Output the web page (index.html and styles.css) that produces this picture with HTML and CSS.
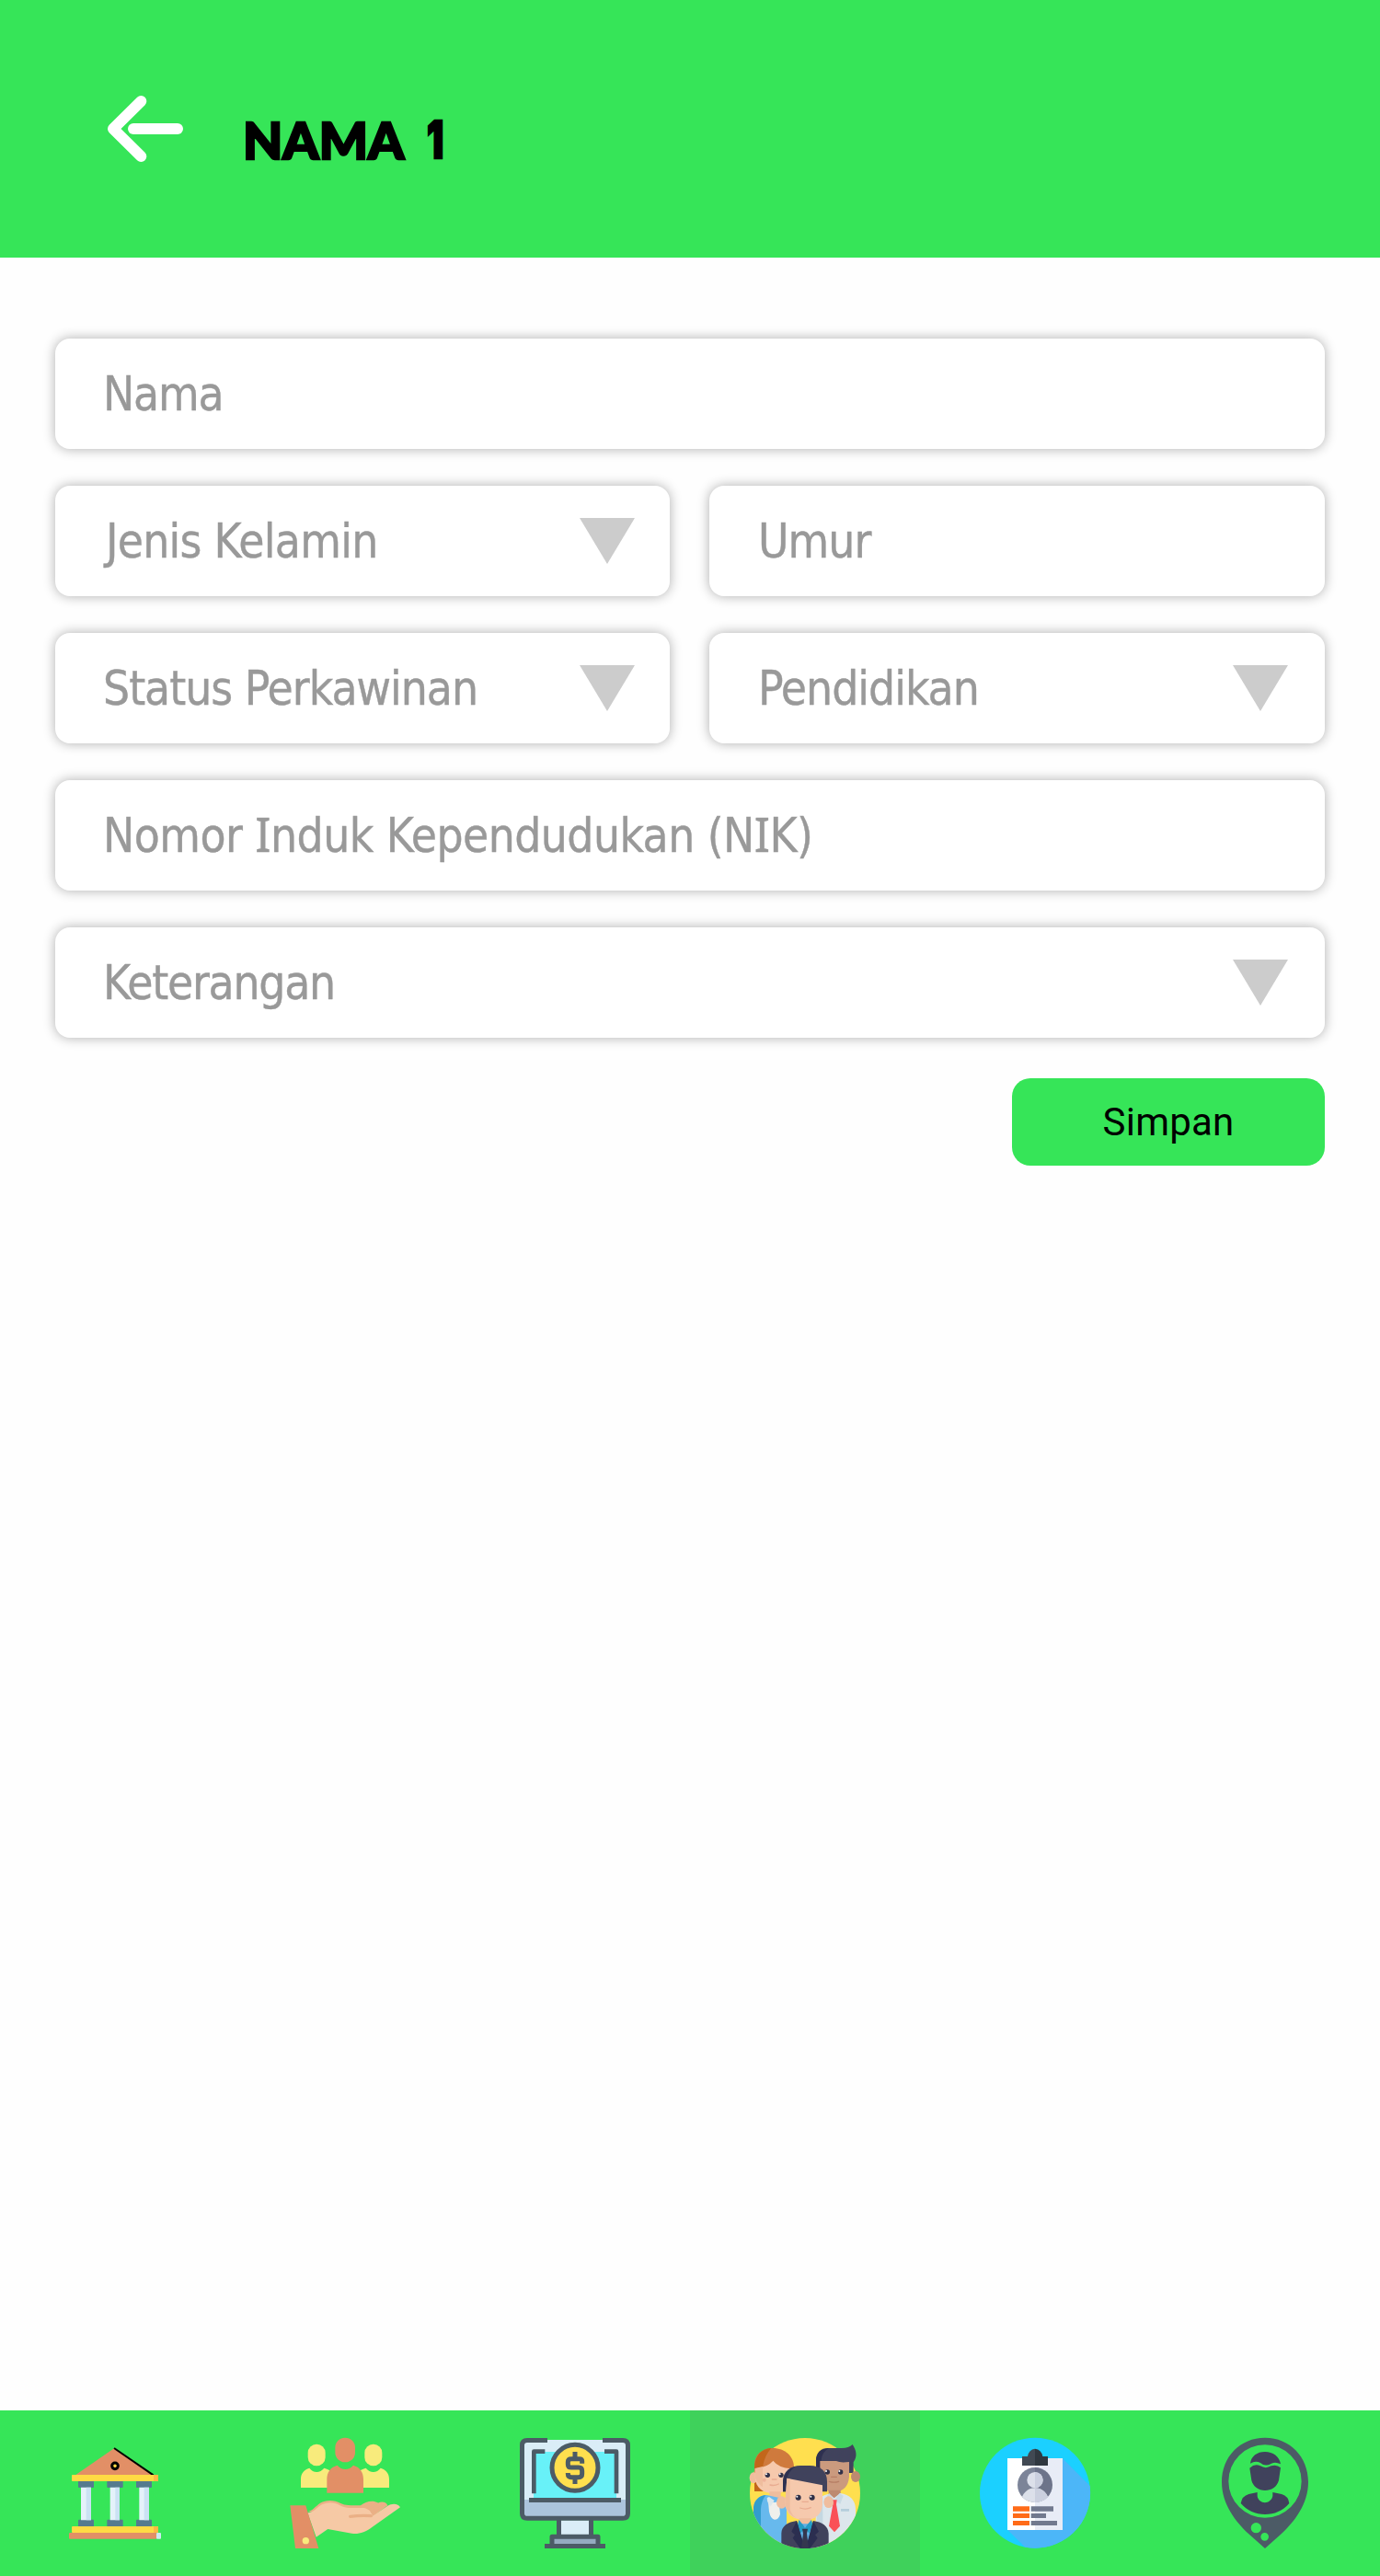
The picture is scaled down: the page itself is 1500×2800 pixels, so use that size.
FILE: index.html
```html
<!DOCTYPE html>
<html lang="id">
<head>
<meta charset="utf-8">
<title>Nama 1</title>
<link rel="stylesheet" href="styles.css">
</head>
<body>
<div class="screen">
  <header class="header">
    <svg class="back" viewBox="0 0 246 216"><g fill="none" stroke="#fff" stroke-width="36" stroke-linecap="round" stroke-linejoin="round"><path d="M109 18L18 108L109 198"/><path d="M84 108H228"/></g></svg>
    <h1 class="title"><span>NAMA</span><span class="title-number">1</span></h1>
  </header>
  <main class="form">
    <div class="field"><span class="label l-nama">Nama</span></div>
    <div class="row">
      <div class="field"><span class="label l-jenis">Jenis Kelamin</span><i class="caret"></i></div>
      <div class="field"><span class="label l-umur">Umur</span></div>
    </div>
    <div class="row">
      <div class="field"><span class="label l-status">Status Perkawinan</span><i class="caret"></i></div>
      <div class="field"><span class="label l-pendidikan">Pendidikan</span><i class="caret"></i></div>
    </div>
    <div class="field"><span class="label l-nik">Nomor <span class="serif-i">I</span>nduk Kependudukan (N<span class="serif-i">I</span>K)</span></div>
    <div class="field"><span class="label l-ket">Keterangan</span><i class="caret"></i></div>
    <button class="save" type="button">Simpan</button>
  </main>
  <nav class="nav">
    <a class="tab">
      <svg width="130" height="140" viewBox="0 0 390 420">
        <path d="M66 151L194 62L320 151Z" fill="#e28f66"/>
        <path d="M192 63L320 151" stroke="#000" stroke-width="6"/>
        <circle cx="195" cy="121" r="10" fill="#ffda44" stroke="#000" stroke-width="9"/>
        <g fill="#557b8e"><rect x="75" y="168" width="51" height="24" rx="3"/><rect x="169" y="168" width="52" height="24" rx="3"/><rect x="264" y="168" width="51" height="24" rx="3"/><rect x="75" y="296" width="51" height="24" rx="3"/><rect x="169" y="296" width="52" height="24" rx="3"/><rect x="264" y="296" width="51" height="24" rx="3"/></g>
        <path d="M84 191H117V298H84ZM179 191H210V298H179ZM274 191H306V298H274Z" fill="#e4f2fa"/>
        <path d="M101 191H117V298H101ZM196 191H210V298H196ZM290 191H306V298H290Z" fill="#cae2f3"/>
        <rect x="54" y="150" width="282" height="21" rx="3" fill="#ffda44"/><rect x="321" y="150" width="15" height="21" rx="3" fill="#ffb844"/>
        <rect x="54" y="318" width="282" height="21" rx="3" fill="#ffda44"/><rect x="321" y="318" width="15" height="21" rx="3" fill="#ffb844"/>
        <rect x="45" y="339" width="286" height="20" rx="3" fill="#e28f66"/><rect x="330" y="339" width="15" height="20" rx="3" fill="#cfe9f0"/>
      </svg>
    </a>
    <a class="tab">
      <svg width="150" height="160" viewBox="0 0 450 480">
        <g fill="#f8eb7c"><rect x="104" y="80" width="57" height="71" rx="28"/><rect x="289" y="80" width="57" height="71" rx="28"/>
        <path d="M81 222V194C81 176 91 163 109 158C121 175 144 175 157 158Q166 160 174 165V222ZM369 222V194C369 176 359 163 341 158C329 175 306 175 293 158Q284 160 276 165V222Z"/></g>
        <rect x="193" y="59" width="65" height="80" rx="32" fill="#e28f66"/>
        <path d="M166 239V195C166 171 178 155 200 149C213 166 239 166 252 149C273 155 285 171 285 195V239Z" fill="#e28f66"/>
        <path d="M103 300C119 298 130 281 144 272C165 260 191 262 211 273C226 281 242 279 276 280C291 268 316 261 332 272C348 265 360 270 364 280L308 322Z" fill="#eab086"/>
        <path d="M103 304C123 304 132 286 150 277C170 268 191 269 207 279C228 292 253 287 285 288C300 289 312 301 315 314L363 282C379 272 399 274 405 286L314 350C291 369 267 374 247 371L169 357L131 383Z" fill="#f6c9a5"/>
        <path d="M242 316Q275 312 310 314" fill="none" stroke="#eab086" stroke-width="10" stroke-linecap="round"/>
        <path d="M300 291L332 272M309 302L360 277" stroke="#eab086" stroke-width="7"/>
        <path d="M46 280H97L139 420H63Z" fill="#e28f66"/><circle cx="97" cy="395" r="11" fill="#f8eb7c"/>
      </svg>
    </a>
    <a class="tab">
      <svg width="150" height="160" viewBox="0 0 450 480">
        <rect x="52" y="66" width="346" height="257" rx="15" fill="#daedf7"/>
        <path d="M90 105H360V256H90Z" fill="#68f1f8"/>
        <path d="M52 261H398V309Q398 323 384 323H66Q52 323 52 309Z" fill="#abc4dc"/>
        <path d="M172 328H278V380H172Z" fill="#daedf7"/><path d="M150 385H300V412H150Z" fill="#95abc0"/>
        <g fill="none" stroke="#4c5b66" stroke-width="15" stroke-linejoin="round"><path d="M135 67.500H69Q52.500 67.500 52.500 84V306Q52.500 322 69 322H381Q397.500 322 397.500 306V84Q397.500 67.500 381 67.500H315"/><path d="M127 104H91V241M321 104H360V241" stroke-width="14"/><path d="M75 262.500H375M172.500 322V382M277.500 322V382"/><path d="M150 412V382H300V412"/><path d="M126 412.500H324"/></g>
        <circle cx="225" cy="157" r="75" fill="#ffdf4e" stroke="#4c5b66" stroke-width="15"/>
        <path d="M248 143V135Q248 128 239 128H213Q202 128 202 138V146Q202 156 213 156H237Q248 156 248 167V177Q248 188 237 188H213Q202 188 202 177V174M225 105V128M225 188V210" fill="none" stroke="#4c5b66" stroke-width="15"/>
      </svg>
    </a>
    <a class="tab tab-active">
      <svg width="150" height="160" viewBox="0 0 450 480">
        <defs><clipPath id="disc"><path d="M0 0H450V240H405A180 180 0 0 1 45 240H0Z"/></clipPath></defs>
        <circle cx="225" cy="240" r="180" fill="#ffdf4f"/>
        <g clip-path="url(#disc)">
          <path d="M60 234V147C60 113 87 93 119 93C161 93 189 120 189 157V234Z" fill="#cf7a3d"/>
          <path d="M60 160C60 119 82 95 115 93Q93 117 87 154V234H60Z" fill="#c2661b"/>
          <ellipse cx="57" cy="190" rx="13" ry="18" fill="#f0bd9d"/>
          <path d="M62 160Q104 155 121 134Q139 157 180 160V196C176 223 158 241 125 241C86 241 65 222 62 190Z" fill="#f6c9ad"/>
          <path d="M62 159L87 153V220Q68 206 62 188Z" fill="#efbd9e"/>
          <path d="M109 235H146V275H109Z" fill="#efbd9e"/>
          <path d="M60 420V285C61 263 75 246 100 246L165 260V420Z" fill="#67b9ed"/>
          <path d="M57 330V285C60 261 75 249 97 246Q82 267 81 291V360Z" fill="#329dce"/>
          <path d="M104 254Q119 279 140 265L144 308Q140 326 125 326Q113 324 108 300Z" fill="#efefeb"/><path d="M108 252L125 264L113 283Q101 272 101 255Z" fill="#dce8ec"/>
          <path d="M261 170V134C261 107 276 93 300 93H345Q368 93 380 81C391 98 398 118 383 139V174H261Z" fill="#40425c"/><path d="M261 160V130Q265 96 303 93Q280 105 278 133V165Z" fill="#2e3050"/>
          <ellipse cx="390" cy="186" rx="15" ry="18" fill="#bd8a70"/>
          <path d="M274 135H327Q340 142 369 138V187C366 219 350 235 320 236C291 236 276 219 274 190Z" fill="#cb9a7e"/>
          <path d="M302 230H341V270H302Z" fill="#bd8a70"/>
          <path d="M260 420V285C260 259 277 248 304 242L320 256L340 240C371 245 390 262 390 292V420Z" fill="#dce6ec"/>
          <path d="M263 300Q268 265 283 254V350H263Z" fill="#c4d7e1"/><path d="M304 240L320 262L306 281L297 248ZM338 240L350 249L340 275L322 262Z" fill="#c9dae4"/>
          <path d="M315 262H329L327 277L339 347L321 367L303 347L316 277Z" fill="#fa5057"/><path d="M342 291H369V299H342Z" fill="#b5cddb"/>
          <ellipse cx="149" cy="270" rx="17" ry="20" fill="#efbd9e"/><ellipse cx="302" cy="269" rx="16" ry="19" fill="#efbd9e"/>
          <path d="M153 235V201C153 169 178 150 210 150H240C276 150 297 169 297 202V235Z" fill="#40425c"/><path d="M153 235V200Q158 163 194 152Q170 170 167 192V235Z" fill="#2e3050"/>
          <path d="M166 191L282 214V278C280 309 257 327 226 327C189 327 162 311 160 272Z" fill="#f6c9ad"/><path d="M166 191L176 193V290Q181 314 202 323Q166 312 160 275Z" fill="#efbd9e"/>
          <path d="M206 322H245V360H206Z" fill="#efbd9e"/>
          <path d="M204 340L246 340L253 420H198Z" fill="#60afe4"/><path d="M205 327Q221 345 225 354Q230 345 246 327L252 350L238 370L225 356L210 370L199 350Z" fill="#259cc5"/>
          <path d="M148 420V371C149 347 169 334 198 330L223 420ZM302 420V371C301 347 280 334 252 330L229 420Z" fill="#40425c"/>
          <path d="M198 330L225 420H209L185 386L192 376L181 365ZM252 330L227 420H241L266 386L258 376L270 365Z" fill="#2b2e50"/>
          <path d="M216 356H234L231 371L237 420H213L219 371Z" fill="#34374f"/>
        </g>
        <g fill="#303047"><circle cx="103" cy="181" r="8"/><circle cx="147" cy="181" r="8"/><circle cx="298" cy="171" r="8"/><circle cx="341" cy="171" r="8"/><circle cx="203" cy="254" r="9"/><circle cx="248" cy="254" r="9"/></g>
        <g fill="#fff"><circle cx="99" cy="178" r="3"/><circle cx="143" cy="178" r="3"/><circle cx="294" cy="168" r="3"/><circle cx="337" cy="168" r="3"/><circle cx="199" cy="251" r="3"/><circle cx="244" cy="251" r="3"/></g>
        <g fill="none" stroke="#e9ac91" stroke-width="4" stroke-linecap="round"><path d="M118 195H132M111 213Q125 217 139 210M216 268H235M209 288Q227 295 244 287"/><path d="M311 187H328M304 202Q320 207 335 202" stroke="#b77f66"/></g><circle cx="92" cy="197" r="6" fill="#efb39b"/>
      </svg>
    </a>
    <a class="tab">
      <svg width="150" height="160" viewBox="0 0 450 480">
        <defs><clipPath id="portrait"><circle cx="225" cy="213" r="57"/></clipPath></defs>
        <circle cx="225" cy="239" r="180" fill="#1bd0ff"/>
        <path d="M315 127L404 216A180 180 0 0 1 193 416L136 360Z" fill="#4cb6f8"/>
        <path d="M135 126H226V360H135Z" fill="#fff"/><path d="M225 126H315V360H225Z" fill="#e8ecf6"/>
        <path d="M183 120H201Q205 97 225 95V150H183Z" fill="#414953"/><path d="M225 95Q246 97 250 120H267V150H225Z" fill="#303840"/>
        <g clip-path="url(#portrait)"><path d="M168 155H225V271H168Z" fill="#7c8498"/><path d="M225 155H283V271H225Z" fill="#6d748a"/><circle cx="225" cy="197" r="26" fill="#dce0ea"/><ellipse cx="225" cy="267" rx="45" ry="44" fill="#dce0ea"/><path d="M225 171A26 26 0 0 1 225 223Q259 225 270 260V271H225Z" fill="#cbd0df"/></g>
        <path d="M153 283H207V299H153ZM153 306H207V321H153ZM153 330H207V345H153Z" fill="#ff6b18"/><path d="M212 283H285V299H212ZM212 306H261V321H212ZM212 330H297V345H212Z" fill="#71798e"/>
      </svg>
    </a>
    <a class="tab">
      <svg width="130" height="160" viewBox="0 0 390 480">
        <path fill="#4c5b66" fill-rule="evenodd" d="M195 59C276 59 336 121 336 203C336 275 292 331 248 373L195 420L142 373C98 331 54 275 54 203C54 121 114 59 195 59ZM195 82A119 119 0 1 0 195 320A119 119 0 1 0 195 82ZM166 336A17 17 0 1 0 166 370A17 17 0 1 0 166 336ZM194 369A13 13 0 1 0 194 395A13 13 0 1 0 194 369Z"/>
        <g fill="#40425c"><path d="M147 143C150 119 169 105 195 105C221 105 242 120 246 145Q230 137 216 143Q196 155 180 141Q164 132 147 143Z"/><path d="M145 158Q162 142 180 151Q197 162 215 151Q233 145 246 157L240 198C234 220 216 231 195 231C174 231 156 218 151 198Z"/><path d="M170 237V249C174 277 214 278 220 249V237L249 243Q272 250 274 273C252 298 226 309 195 309C164 309 137 297 116 273Q120 249 142 243Z"/></g>
      </svg>
    </a>
  </nav>
</div>
</body>
</html>
```
FILE: styles.css
```css
* { box-sizing: border-box; }
body { margin: 0; background: #fefefe; }
.screen { width: 1500px; height: 2800px; display: flex; flex-direction: column; }
.header { height: 280px; background: #36e558; display: flex; align-items: flex-start; padding: 104px 0 0 117px; }
.back { width: 82px; height: 72px; display: block; }
.title { margin: 13px 0 0 65px; display: flex; gap: 25px; font: 900 56px/70px Lato, sans-serif; color: #000; -webkit-text-stroke: 2.5px #000; }
.title-number { font-family: Inter, sans-serif; transform: scaleX(.72); transform-origin: left; }
.form { flex: 1; padding: 88px 60px 0; display: flex; flex-direction: column; gap: 40px; }
.row { display: grid; grid-template-columns: 668px 669px; gap: 43px; }
.field { height: 120px; background: #fff; border-radius: 16px; box-shadow: 0 0 13px rgba(0, 0, 0, .32); display: flex; align-items: center; justify-content: space-between; padding: 0 40px 0 52px; }
.row .field:first-child { padding-right: 38px; }
.label { font: 51px/70px "DejaVu Sans Condensed", "DejaVu Sans", sans-serif; font-stretch: condensed; color: #999; white-space: nowrap; letter-spacing: -1px; padding-top: 1px; -webkit-text-stroke: .4px #999; }
.l-nama, .l-ket { letter-spacing: -1.25px; }
.l-jenis { padding-left: 3px; letter-spacing: -.75px; }
.l-umur, .l-pendidikan { padding-left: 1px; }
.l-nik { letter-spacing: -.55px; }
.serif-i { font-family: "Noto Sans", sans-serif; line-height: 1; }
.caret { width: 60px; height: 50px; background: #ccc; clip-path: polygon(0 0, 100% 0, 50% 100%); }
.save { align-self: flex-end; width: 340px; height: 95px; margin-top: 4px; padding: 0; border: 0; border-radius: 20px; background: #36e558; color: #000; font: 42px/50px Roboto, sans-serif; letter-spacing: .2px; }
.nav { height: 180px; background: #36e558; display: grid; grid-template-columns: repeat(6, 1fr); }
.tab { display: flex; align-items: center; justify-content: center; }
.tab-active { background: #3fd15b; }
```
